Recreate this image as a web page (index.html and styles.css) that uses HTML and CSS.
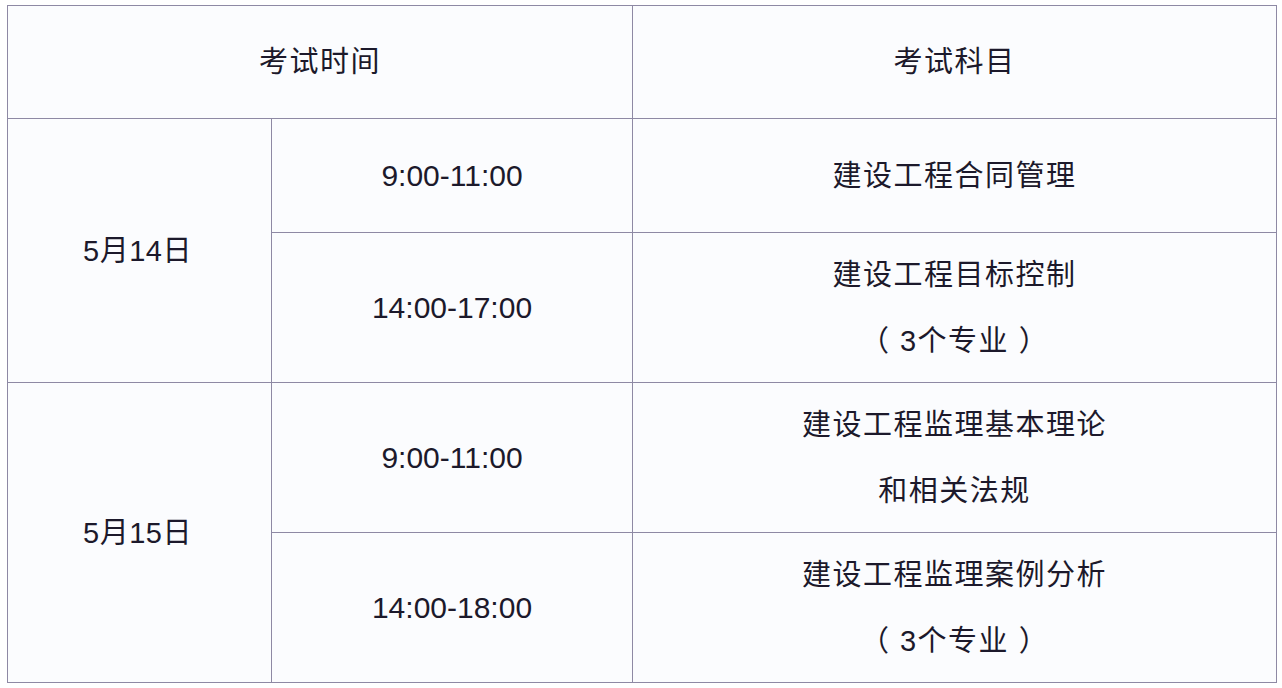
FILE: index.html
```html
<!DOCTYPE html>
<html lang="zh-CN">
<head>
<meta charset="utf-8">
<title>考试时间安排</title>
<link rel="stylesheet" href="styles.css">
</head>
<body>
<table class="schedule">
  <colgroup>
    <col class="c-date">
    <col class="c-time">
    <col class="c-subject">
  </colgroup>
  <tr class="r-head">
    <th colspan="2">考试时间</th>
    <th>考试科目</th>
  </tr>
  <tr class="r-short">
    <td rowspan="2" class="date">5月14日</td>
    <td class="num">9:00-11:00</td>
    <td><div class="line">建设工程合同管理</div></td>
  </tr>
  <tr class="r-tall">
    <td class="num">14:00-17:00</td>
    <td><div class="line">建设工程目标控制</div><div class="line">（ 3个专业 ）</div></td>
  </tr>
  <tr class="r-tall">
    <td rowspan="2" class="date">5月15日</td>
    <td class="num">9:00-11:00</td>
    <td><div class="line">建设工程监理基本理论</div><div class="line">和相关法规</div></td>
  </tr>
  <tr class="r-tall">
    <td class="num">14:00-18:00</td>
    <td><div class="line">建设工程监理案例分析</div><div class="line">（ 3个专业 ）</div></td>
  </tr>
</table>
</body>
</html>
```
FILE: styles.css
```css
html, body {
  margin: 0;
  background: #ffffff;
}
body {
  padding: 5px 0 0 7px;
  font-family: "Liberation Sans", "Noto Sans CJK SC", sans-serif;
  color: #1c192b;
}
.schedule {
  border-collapse: collapse;
  table-layout: fixed;
  width: 1269px;
  background: #fbfcfe;
}
.c-date { width: 264px; }
.c-time { width: 361px; }
.c-subject { width: 644px; }
.schedule th,
.schedule td {
  border: 1px solid #8e89a4;
  padding: 0;
  text-align: center;
  vertical-align: middle;
  font-weight: normal;
  font-size: 29px;
  letter-spacing: 1.5px;
  line-height: 34px;
}
.schedule .num {
  letter-spacing: 0;
  font-size: 30px;
}
.schedule .date {
  letter-spacing: 0.5px;
  padding-right: 4px;
}
.r-head { height: 113px; }
.r-short { height: 114px; }
.r-tall { height: 150px; }
.line + .line { margin-top: 32px; }
```
